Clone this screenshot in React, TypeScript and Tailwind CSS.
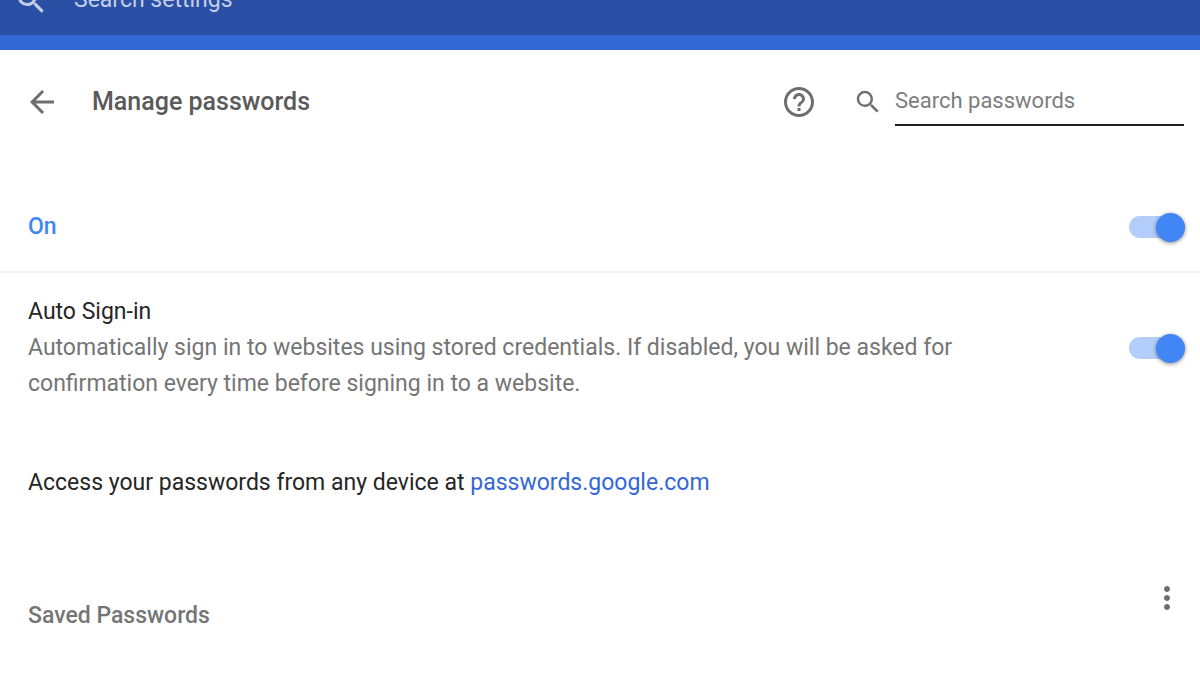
import { useState } from 'react'
import { MdArrowBack, MdHelpOutline, MdMoreVert, MdSearch } from 'react-icons/md'

type toggleProps = {
    id: string
    checked: boolean
    change: (checked: boolean) => void
}

const Toggle = ({ id, checked, change }: toggleProps) => {
    return (
        <input
            id={id}
            type="checkbox"
            role="switch"
            checked={checked}
            onChange={(e) => change(e.target.checked)}
            className="mr-px flex h-[22px] w-14 shrink-0 cursor-pointer appearance-none items-center rounded-full bg-gray-300 before:size-[29px] before:shrink-0 before:rounded-full before:bg-white before:shadow-[0_1px_4px_rgba(0,0,0,0.45)] checked:justify-end checked:bg-[#b4cefb] checked:before:bg-[#4285f4]"
        />
    )
}

export const App = () => {
    const [enabled, setEnabled] = useState(true)
    const [autoSignIn, setAutoSignIn] = useState(true)
    const [query, setQuery] = useState('')
    const [settingsQuery, setSettingsQuery] = useState('')

    return (
        <div className="min-h-screen bg-white font-[Roboto,sans-serif] text-[23px] leading-9 text-[#262626]">
            <header className="border-b-[15px] border-[#3367d6] bg-[#2a50a6]">
                <div className="flex h-[35px] items-end overflow-hidden">
                    <div className="flex h-[70px] w-full shrink-0 items-center gap-[25px] px-[13px] text-[#c3cee6]">
                        <MdSearch className="size-9 shrink-0" />
                        <input
                            type="text"
                            aria-label="Search settings"
                            placeholder="Search settings"
                            value={settingsQuery}
                            onChange={(e) => setSettingsQuery(e.target.value)}
                            className="h-9 flex-1 bg-transparent outline-none placeholder:text-[#c3cee6]"
                        />
                    </div>
                </div>
            </header>

            <main>
                <div className="flex h-[104px] items-center pr-4 pl-6">
                    <button
                        aria-label="Back"
                        className="text-[#6e6e6e]"
                    >
                        <MdArrowBack className="size-9" />
                    </button>
                    <h1 className="ml-8 flex-1 text-[25px] font-medium text-[#5a5a5a]">
                        Manage passwords
                    </h1>
                    <button aria-label="Help" className="text-[#6e6e6e]">
                        <MdHelpOutline className="size-9" />
                    </button>
                    <label
                        htmlFor="search"
                        aria-label="Search passwords"
                        className="mr-3 ml-9 text-[#6e6e6e]"
                    >
                        <MdSearch className="size-[30px]" />
                    </label>
                    <input
                        id="search"
                        type="text"
                        placeholder="Search passwords"
                        value={query}
                        onChange={(e) => setQuery(e.target.value)}
                        className="h-12 w-[289px] border-b-2 border-[#212121] bg-transparent pb-0.5 text-[22px] outline-none placeholder:text-[#7d7d7d]"
                    />
                </div>

                <div className="mt-[29px] flex h-[90px] items-center justify-between border-b-2 border-[#f0f0f0] pr-3.5 pl-7">
                    <label
                        htmlFor="enabled"
                        className="font-medium text-[#4285f4]"
                    >
                        On
                    </label>
                    <Toggle
                        id="enabled"
                        checked={enabled}
                        change={setEnabled}
                    />
                </div>

                <div className="flex items-center justify-between py-[21px] pr-3.5 pl-7">
                    <div className="max-w-[960px]">
                        <label htmlFor="auto-sign-in">Auto Sign-in</label>
                        <p className="text-[#757575]">
                            Automatically sign in to websites using stored
                            credentials. If disabled, you will be asked for
                            confirmation every time before signing in to a
                            website.
                        </p>
                    </div>
                    <Toggle
                        id="auto-sign-in"
                        checked={autoSignIn}
                        change={setAutoSignIn}
                    />
                </div>

                <p className="mt-[42px] px-7">
                    Access your passwords from any device at{' '}
                    <a href="#passwords" className="text-[#3367d6]">
                        passwords.google.com
                    </a>
                </p>

                <div className="mt-[79px] flex items-start justify-between pr-[15px] pl-7">
                    <h2 className="mt-[18px] font-medium text-[#757575]">
                        Saved Passwords
                    </h2>
                    <button
                        aria-label="More actions"
                        className="text-[#6e6e6e]"
                    >
                        <MdMoreVert className="size-9" />
                    </button>
                </div>
            </main>
        </div>
    )
}

export default App
